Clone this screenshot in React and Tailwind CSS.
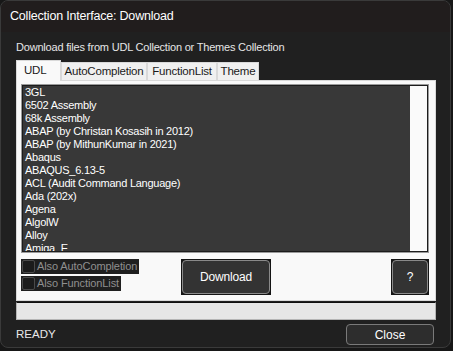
import React from 'react';

const languages = [
  '3GL',
  '6502 Assembly',
  '68k Assembly',
  'ABAP (by Christan Kosasih in 2012)',
  'ABAP (by MithunKumar in 2021)',
  'Abaqus',
  'ABAQUS_6.13-5',
  'ACL (Audit Command Language)',
  'Ada (202x)',
  'Agena',
  'AlgolW',
  'Alloy',
  'Amiga_E',
];

const tabs = ['UDL', 'AutoCompletion', 'FunctionList', 'Theme'];

const Check = ({ label }) => (
  <label className="flex items-center gap-[2px] h-[15px] bg-[#1f1f1f] pl-[1px] pr-[2px] self-start">
    <span className="shrink-0 w-[13px] h-[13px] rounded-[2px] border border-[#4a4a4a] bg-[#1b1b1b]" />
    <span className="text-[11px] tracking-[-0.1px] leading-[13px] text-[#8f8f8f] whitespace-nowrap">{label}</span>
  </label>
);

const DarkButton = ({ children, className }) => (
  <div className={`bg-[#141414] p-[1px] ${className}`}>
    <div className="w-full h-full rounded-[4px] border border-[#8a8a8a] bg-[#333333] flex items-center justify-center text-[12px] tracking-[-0.2px] text-white">
      {children}
    </div>
  </div>
);

export default function App() {
  const [tab, setTab] = React.useState('UDL');

  return (
    <div className="w-[453px] h-[351px] bg-[#171717] overflow-hidden" style={{ fontFamily: '"Liberation Sans", Arial, sans-serif' }}>
      <div className="w-[451px] h-[348px] rounded-[8px] border border-[#3a3a3a] bg-[#202020] overflow-hidden flex flex-col">
        {/* title bar */}
        <div className="h-[31px] shrink-0 bg-[#211d1d] flex items-center pl-[9px] text-[12.5px] tracking-[-0.2px] text-white">
          Collection Interface: Download
        </div>

        <div className="flex flex-col px-[15px]">
          <div className="mt-[8px] h-[14px] text-[11px] tracking-[-0.2px] leading-[14px] text-[#e6e6e6]">
            Download files from UDL Collection or Themes Collection
          </div>

          {/* tabs */}
          <div className="mt-[5px] flex items-end h-[21px]">
            {tabs.map((t, i) => {
              const active = t === tab;
              const widths = ['w-[45px]', 'w-[86px]', 'w-[70px]', 'w-[42px]'];
              return (
                <button
                  key={t}
                  onClick={() => setTab(t)}
                  className={`${widths[i]} border border-b-0 border-[#d9d9d9] text-[11.5px] tracking-[-0.2px] text-[#1a1a1a] flex items-center ${
                    active ? 'h-[21px] bg-[#f9f9f9] justify-start pl-[7px] -mb-[1px] relative z-10' : 'h-[18px] bg-[#f0f0f0] justify-center'
                  }`}
                >
                  {t}
                </button>
              );
            })}
          </div>

          {/* panel */}
          <div className="w-[420px] h-[221px] bg-[#f9f9f9] border border-[#d9d9d9] pl-[4px] pr-[6px] pt-[3px] flex flex-col">
            <div className="h-[169px] border border-[#9a9a9a] flex">
              <div className="flex-1 border border-[#1c1c1c] bg-[#383838] flex overflow-hidden">
                <ul className="flex-1 pl-[2px] text-[11px] tracking-[-0.25px] leading-[13px] text-white overflow-hidden">
                  {languages.map((l) => (
                    <li key={l} className="whitespace-nowrap">{l}</li>
                  ))}
                </ul>
                <div className="w-[17px] bg-[#fafafa]" />
              </div>
            </div>

            <div className="mt-[6px] flex items-start">
              <div className="flex flex-col gap-[2px] w-[160px]">
                <Check label="Also AutoCompletion" />
                <Check label="Also FunctionList" />
              </div>
              <DarkButton className="w-[90px] h-[36px]">Download</DarkButton>
              <div className="flex-1" />
              <DarkButton className="w-[38px] h-[36px]">?</DarkButton>
            </div>
          </div>

          {/* progress */}
          <div className="mt-[1px] w-[420px] h-[18px] border border-[#b5b5b5] border-t-[#101010] bg-[#e6e6e6]" />

          <div className="mt-[4px] flex items-start">
            <span className="mt-[3px] text-[11.5px] leading-[14px] text-[#e8e8e8]">READY</span>
            <div className="flex-1" />
            <button className="w-[88px] h-[21px] mr-[1px] rounded-[4px] border border-[#7a7a7a] bg-[#2d2d2d] text-[12px] text-white">
              Close
            </button>
          </div>
        </div>
      </div>
    </div>
  );
}
